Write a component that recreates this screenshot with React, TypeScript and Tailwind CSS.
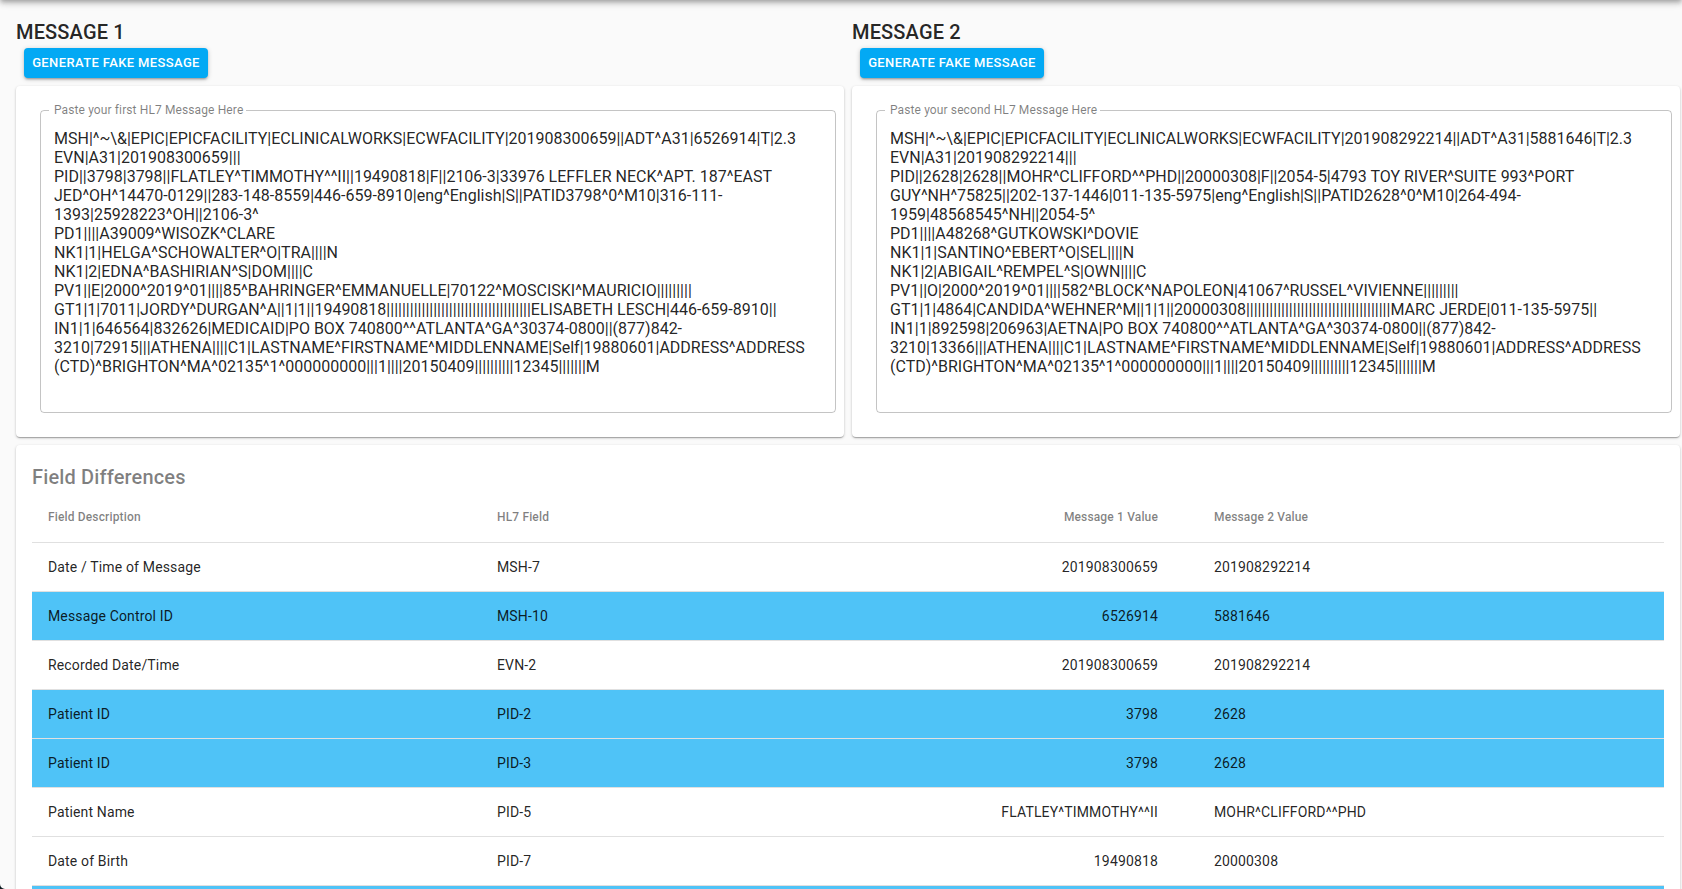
import React from "react";

const firstMessage = [
  "MSH|^~\\&|EPIC|EPICFACILITY|ECLINICALWORKS|ECWFACILITY|201908300659||ADT^A31|6526914|T|2.3",
  "EVN|A31|201908300659|||",
  "PID||3798|3798||FLATLEY^TIMMOTHY^^II||19490818|F||2106-3|33976 LEFFLER NECK^APT. 187^EAST JED^OH^14470-0129||283-148-8559|446-659-8910|eng^English|S||PATID3798^0^M10|316-111-1393|25928223^OH||2106-3^",
  "PD1||||A39009^WISOZK^CLARE",
  "NK1|1|HELGA^SCHOWALTER^O|TRA||||N",
  "NK1|2|EDNA^BASHIRIAN^S|DOM||||C",
  "PV1||E|2000^2019^01||||85^BAHRINGER^EMMANUELLE|70122^MOSCISKI^MAURICIO|||||||||",
  "GT1|1|7011|JORDY^DURGAN^A||1|1||19490818" + "|".repeat(37) + "ELISABETH LESCH|446-659-8910||",
  "IN1|1|646564|832626|MEDICAID|PO BOX 740800^^ATLANTA^GA^30374-0800||(877)842-3210|72915|||ATHENA||||C1|LASTNAME^FIRSTNAME^MIDDLENNAME|Self|19880601|ADDRESS^ADDRESS (CTD)^BRIGHTON^MA^02135^1^000000000|||1||||20150409||||||||||12345|||||||M",
].join("\n");

const secondMessage = [
  "MSH|^~\\&|EPIC|EPICFACILITY|ECLINICALWORKS|ECWFACILITY|201908292214||ADT^A31|5881646|T|2.3",
  "EVN|A31|201908292214|||",
  "PID||2628|2628||MOHR^CLIFFORD^^PHD||20000308|F||2054-5|4793 TOY RIVER^SUITE 993^PORT GUY^NH^75825||202-137-1446|011-135-5975|eng^English|S||PATID2628^0^M10|264-494-1959|48568545^NH||2054-5^",
  "PD1||||A48268^GUTKOWSKI^DOVIE",
  "NK1|1|SANTINO^EBERT^O|SEL||||N",
  "NK1|2|ABIGAIL^REMPEL^S|OWN||||C",
  "PV1||O|2000^2019^01||||582^BLOCK^NAPOLEON|41067^RUSSEL^VIVIENNE|||||||||",
  "GT1|1|4864|CANDIDA^WEHNER^M||1|1||20000308" + "|".repeat(37) + "MARC JERDE|011-135-5975||",
  "IN1|1|892598|206963|AETNA|PO BOX 740800^^ATLANTA^GA^30374-0800||(877)842-3210|13366|||ATHENA||||C1|LASTNAME^FIRSTNAME^MIDDLENNAME|Self|19880601|ADDRESS^ADDRESS (CTD)^BRIGHTON^MA^02135^1^000000000|||1||||20150409||||||||||12345|||||||M",
].join("\n");

interface Difference {
  description: string;
  field: string;
  first: string;
  second: string;
  highlighted?: boolean;
}

const differences: Difference[] = [
  { description: "Date / Time of Message", field: "MSH-7", first: "201908300659", second: "201908292214" },
  { description: "Message Control ID", field: "MSH-10", first: "6526914", second: "5881646", highlighted: true },
  { description: "Recorded Date/Time", field: "EVN-2", first: "201908300659", second: "201908292214" },
  { description: "Patient ID", field: "PID-2", first: "3798", second: "2628", highlighted: true },
  { description: "Patient ID", field: "PID-3", first: "3798", second: "2628", highlighted: true },
  { description: "Patient Name", field: "PID-5", first: "FLATLEY^TIMMOTHY^^II", second: "MOHR^CLIFFORD^^PHD" },
  { description: "Date of Birth", field: "PID-7", first: "19490818", second: "20000308" },
  { description: "", field: "", first: "", second: "", highlighted: true },
];

const paper =
  "rounded-[4px] bg-white shadow-[0_1px_3px_0_rgba(0,0,0,0.2),0_1px_1px_0_rgba(0,0,0,0.14),0_2px_1px_-1px_rgba(0,0,0,0.12)]";

function MessagePanel({ title, label, value }: { title: string; label: string; value: string }) {
  return (
    <section className="w-[828px]">
      <h6 className="text-[20px] leading-8 font-medium tracking-[0.0075em]">{title}</h6>
      <button className="ml-2 block h-[30px] w-[184px] rounded-[4px] bg-[#03a9f4] text-[13px] font-medium tracking-[0.02857em] whitespace-nowrap text-white shadow-[0_1px_5px_0_rgba(0,0,0,0.2),0_2px_2px_0_rgba(0,0,0,0.14),0_3px_1px_-2px_rgba(0,0,0,0.12)]">
        GENERATE FAKE MESSAGE
      </button>
      <div className={`mt-2 h-[351px] pt-4 pr-2 pl-6 ${paper}`}>
        <fieldset className="h-[311px] rounded-[4px] border border-black/23 px-2">
          <legend className="pr-[3px] pl-[5px] text-[12px] leading-4 tracking-[0.00938em] text-black/50">{label}</legend>
          <textarea
            className="mt-[11px] block h-[266px] w-[768px] resize-none overflow-hidden px-[5px] text-[16px] leading-[19px] outline-none"
            spellCheck={false}
            defaultValue={value}
          />
        </fieldset>
      </div>
    </section>
  );
}

export default function App() {
  return (
    <div className="relative flex h-[889px] flex-col overflow-hidden bg-[#fafafa] font-['Roboto',sans-serif] text-black/87">
      <header className="-mt-16 h-16 shrink-0 bg-[#03a9f4] shadow-[0_2px_4px_-1px_rgba(0,0,0,0.2),0_4px_5px_0_rgba(0,0,0,0.14),0_1px_10px_0_rgba(0,0,0,0.12)]" />
      <main className="w-[1680px] shrink-0 pt-4 pl-4">
        <div className="flex gap-2">
          <MessagePanel title="MESSAGE 1" label="Paste your first HL7 Message Here" value={firstMessage} />
          <MessagePanel title="MESSAGE 2" label="Paste your second HL7 Message Here" value={secondMessage} />
        </div>
        <section className={`mt-2 h-[520px] px-4 pt-4 ${paper}`}>
          <h6 className="text-[20px] leading-8 font-medium tracking-[0.0075em] text-black/50">Field Differences</h6>
          <table className="w-full table-fixed border-collapse text-left text-[14px] leading-5 tracking-[0.01071em]">
            <colgroup>
              <col className="w-[449px]" />
              <col className="w-[260px]" />
              <col className="w-[457px]" />
              <col />
            </colgroup>
            <thead>
              <tr className="h-[49px] border-b border-[#e0e0e0] text-[12px] text-black/50">
                <th className="pr-10 pl-4 font-medium">Field Description</th>
                <th className="pr-10 pl-4 font-medium">HL7 Field</th>
                <th className="pr-10 pl-4 text-right font-medium">Message 1 Value</th>
                <th className="pr-10 pl-4 font-medium">Message 2 Value</th>
              </tr>
            </thead>
            <tbody>
              {differences.map((row, i) => (
                <tr key={i} className={`h-[49px] border-b border-[#e0e0e0] ${row.highlighted ? "bg-[#4fc3f7]" : ""}`}>
                  <td className="pr-10 pl-4">{row.description}</td>
                  <td className="pr-10 pl-4">{row.field}</td>
                  <td className="pr-10 pl-4 text-right">{row.first}</td>
                  <td className="pr-10 pl-4">{row.second}</td>
                </tr>
              ))}
            </tbody>
          </table>
        </section>
      </main>
      <svg className="absolute bottom-0 left-0 h-[5px] w-[5px]" viewBox="0 0 5 5" fill="#0b1a20" aria-hidden="true">
        <path d="M0 0 A5 5 0 0 0 5 5 H0 Z" />
      </svg>
    </div>
  );
}
